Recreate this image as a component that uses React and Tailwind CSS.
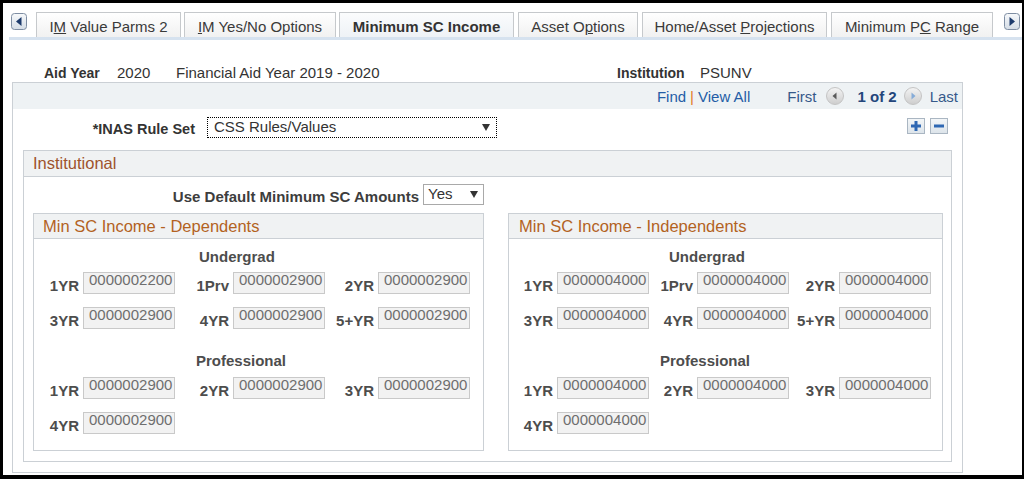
import React from 'react'

const tabs = [
  { key: 'imv', cls: 'w-[145px] ml-[9px]', label: <>I<u>M</u> Value Parms 2</> },
  { key: 'imy', cls: 'w-[152px] ml-[3px]', label: <><u>I</u>M Yes/No Options</> },
  { key: 'msc', cls: 'w-[175px] ml-[3px]', label: 'Minimum SC Income', active: true },
  { key: 'ao', cls: 'w-[120px] ml-[4px]', label: <>Asset O<u>p</u>tions</> },
  { key: 'hap', cls: 'w-[185px] ml-[4px]', label: <>Home/Asset <u>P</u>rojections</> },
  { key: 'mpc', cls: 'w-[162px] ml-[4px]', label: <>Minimum P<u>C</u> Range</> },
]

const depUnder = [
  ['1YR', '0000002200'], ['1Prv', '0000002900'], ['2YR', '0000002900'],
  ['3YR', '0000002900'], ['4YR', '0000002900'], ['5+YR', '0000002900'],
]
const depProf = [['1YR', '0000002900'], ['2YR', '0000002900'], ['3YR', '0000002900'], ['4YR', '0000002900']]
const indUnder = [
  ['1YR', '0000004000'], ['1Prv', '0000004000'], ['2YR', '0000004000'],
  ['3YR', '0000004000'], ['4YR', '0000004000'], ['5+YR', '0000004000'],
]
const indProf = [['1YR', '0000004000'], ['2YR', '0000004000'], ['3YR', '0000004000'], ['4YR', '0000004000']]

function TabArrow({ dir }) {
  return (
    <svg width="16" height="17" viewBox="0 0 16 17">
      <defs>
        <linearGradient id={'ta' + dir} x1="0" y1="0" x2="0" y2="1">
          <stop offset="0" stopColor="#f7f9fb" />
          <stop offset="1" stopColor="#d5dde6" />
        </linearGradient>
      </defs>
      <rect x="0.5" y="0.5" width="15" height="16" rx="3" fill={'url(#ta' + dir + ')'} stroke="#7f8ea3" />
      {dir === 'left'
        ? <path d="M10.5 4 L5 8.5 L10.5 13 Z" fill="#1d3b6c" />
        : <path d="M5.5 4 L11 8.5 L5.5 13 Z" fill="#1d3b6c" />}
    </svg>
  )
}

function NavCircle({ dir }) {
  return (
    <svg width="18" height="18" viewBox="0 0 18 18">
      <defs>
        <linearGradient id={'nc' + dir} x1="0" y1="0" x2="0" y2="1">
          <stop offset="0" stopColor="#f4f4f4" />
          <stop offset="1" stopColor="#cdcdcd" />
        </linearGradient>
      </defs>
      <circle cx="9" cy="9" r="8.5" fill={'url(#nc' + dir + ')'} stroke="#c4c4c4" />
      {dir === 'left'
        ? <path d="M10.5 5.5 L6.5 9 L10.5 12.5 Z" fill="#5a5a5a" />
        : <path d="M7.5 5.5 L11.5 9 L7.5 12.5 Z" fill="#86acd8" />}
    </svg>
  )
}

function RowButton({ kind }) {
  return (
    <div className="flex h-[16px] w-[18px] items-center justify-center border border-[#aab6c2] bg-linear-to-b from-[#f3f6f8] to-[#dde4ea]">
      <svg width="12" height="12" viewBox="0 0 12 12">
        {kind === 'plus' && <rect x="4.5" y="1" width="3" height="10" fill="#2f68b3" />}
        <rect x="1" y="4.5" width="10" height="3" fill="#2f68b3" />
      </svg>
    </div>
  )
}

function DropArrow() {
  return (
    <svg width="8" height="7" viewBox="0 0 8 7">
      <path d="M0 0 L8 0 L4 7 Z" fill="#333" />
    </svg>
  )
}

function Field({ label, value }) {
  return (
    <div className="flex items-end justify-end">
      <span className="mr-[4px] text-[15px] font-bold leading-[17px] text-[#4d4d4d]">{label}</span>
      <div className="h-[22px] w-[92px] border border-[#c9c9c9] bg-[#f2f2f2] pl-[5px] text-[15px] leading-[13px] text-[#6e6e6e]">
        {value}
      </div>
    </div>
  )
}

function IncomeBox({ title, boxCls, titleCls, gridCls, underCls, profCls, under, prof }) {
  return (
    <div className={'border border-[#cbd0d5] ' + boxCls}>
      <div className={'flex h-[25px] items-center border-b border-[#cbd0d5] bg-[#f0f2f3] text-[16.5px] text-[#b3621f] ' + titleCls}>
        {title}
      </div>
      <div className="pt-[9px] pb-[16px]">
        <div className={'text-[15px] font-bold leading-[17px] text-[#4d4d4d] ' + underCls}>Undergrad</div>
        <div className={'mt-[7px] grid gap-y-[13px] ' + gridCls}>
          {under.map(([l, v]) => <Field key={l} label={l} value={v} />)}
        </div>
        <div className={'mt-[23px] text-[15px] font-bold leading-[17px] text-[#4d4d4d] ' + profCls}>Professional</div>
        <div className={'mt-[8px] grid gap-y-[13px] ' + gridCls}>
          {prof.map(([l, v]) => <Field key={l} label={l} value={v} />)}
        </div>
      </div>
    </div>
  )
}

export default function App() {
  return (
    <div className="h-[479px] w-[1024px] overflow-hidden border-t-[3px] border-r-[2px] border-b-[4px] border-l-[3px] border-black bg-white font-['Liberation_Sans',Arial,sans-serif] text-[#333]">
      {/* tab strip */}
      <div className="flex items-start pt-[9px] pl-[8px]">
        <div className="mt-[1px]"><TabArrow dir="left" /></div>
        {tabs.map((t) => (
          <div
            key={t.key}
            className={
              'flex h-[25px] items-center justify-center border-x border-t border-[#c6c9cc] pt-[3px] text-[15px] leading-[17px] whitespace-nowrap ' +
              t.cls +
              (t.active ? ' bg-linear-to-b from-[#fbfcfd] to-[#eef2f6] font-bold text-[#333]' : ' bg-linear-to-b from-white to-[#f1f1f1] text-[#3a3a3a]')
            }
          >
            <span>{t.label}</span>
          </div>
        ))}
        <div className="mt-[1px] ml-[11px]"><TabArrow dir="right" /></div>
      </div>
      <div className="ml-[6px] h-[3px] bg-[#d6e2ef]" />

      {/* key fields */}
      <div className="mt-[25px] flex h-[16px] items-baseline pl-[41px] leading-[16px]">
        <span className="w-[73px] text-[14px] font-bold">Aid Year</span>
        <span className="w-[59px] text-[15px]">2020</span>
        <span className="w-[441px] text-[15px]">Financial Aid Year 2019 - 2020</span>
        <span className="w-[83px] text-[14px] font-bold">Institution</span>
        <span className="text-[15px]">PSUNV</span>
      </div>

      {/* scroll area */}
      <div className="mt-[1px] ml-[9px] w-[951px] border border-[#cbd0d5]">
        <div className="flex h-[26px] items-center justify-end bg-[#eef2f4] pr-[4px] text-[15px] leading-[17px]">
          <span className="text-[#245da6]">Find</span>
          <span className="ml-[4px] text-[#e2792c]">|</span>
          <span className="ml-[4px] text-[#245da6]">View All</span>
          <span className="ml-[37px] text-[#36598a]">First</span>
          <span className="ml-[10px] flex"><NavCircle dir="left" /></span>
          <span className="ml-[13px] font-bold text-[#24467c]">1 of 2</span>
          <span className="ml-[7px] flex"><NavCircle dir="right" /></span>
          <span className="ml-[8px] text-[#36598a]">Last</span>
        </div>

        <div className="flex items-end pt-[8px]">
          <div className="w-[182px] text-right text-[14.5px] font-bold leading-[17px]">*INAS Rule Set</div>
          <div className="ml-[12px] flex h-[21px] w-[290px] items-center justify-between border border-dotted border-black bg-white pr-[6px] pl-[6px] text-[15px] leading-[17px]">
            <span className="-mt-[3px]">CSS Rules/Values</span>
            <DropArrow />
          </div>
          <div className="mr-[14px] mb-[4px] ml-auto flex gap-[5px]">
            <RowButton kind="plus" />
            <RowButton kind="minus" />
          </div>
        </div>

        {/* institutional group */}
        <div className="mt-[12px] mb-[10px] ml-[10px] w-[929px] border border-[#cbd0d5] pb-[10px]">
          <div className="flex h-[26px] items-center border-b border-[#cbd0d5] bg-[#f0f2f3] pl-[9px] text-[16.5px] text-[#9e532d]">
            Institutional
          </div>
          <div className="flex items-end pt-[7px]">
            <div className="w-[395px] text-right text-[15px] font-bold leading-[17px] text-[#3d3d3d]">Use Default Minimum SC Amounts</div>
            <div className="ml-[4px] flex h-[21px] w-[61px] items-center justify-between border border-[#a9a9a9] bg-white pr-[5px] pl-[4px] text-[15px] leading-[17px]">
              <span className="-mt-[3px]">Yes</span>
              <DropArrow />
            </div>
          </div>

          <div className="mt-[8px] ml-[9px] flex gap-[24px]">
            <IncomeBox
              title="Min SC Income - Dependents"
              boxCls="w-[451px]"
              titleCls="pl-[9px]"
              gridCls="grid-cols-[141px_150px_145px]"
              underCls="ml-[165px]"
              profCls="ml-[162px]"
              under={depUnder}
              prof={depProf}
            />
            <IncomeBox
              title="Min SC Income - Independents"
              boxCls="w-[435px]"
              titleCls="pl-[10px]"
              gridCls="grid-cols-[140px_140px_142px]"
              underCls="ml-[160px]"
              profCls="ml-[151px]"
              under={indUnder}
              prof={indProf}
            />
          </div>
        </div>
      </div>
    </div>
  )
}
